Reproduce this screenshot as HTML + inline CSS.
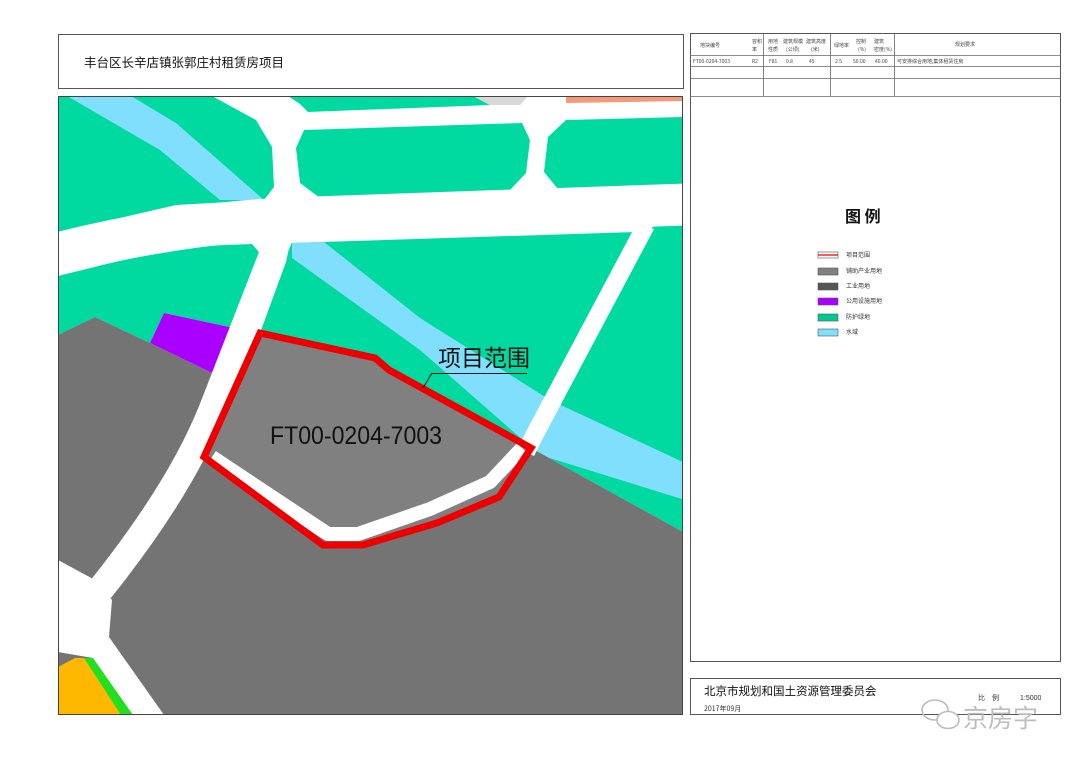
<!DOCTYPE html>
<html><head><meta charset="utf-8">
<style>
html,body{margin:0;padding:0;background:#fff;}
body{width:1080px;height:764px;position:relative;overflow:hidden;font-family:"Liberation Sans","Noto Sans CJK SC",sans-serif;}
.abs{position:absolute;}
</style></head><body>
<svg class="abs" style="left:0;top:0" width="1080" height="764" viewBox="0 0 1080 764">
<defs><clipPath id="mc"><rect x="58" y="96" width="625" height="619"/></clipPath></defs>
<!-- title box -->
<rect x="58.5" y="34.5" width="625" height="54" fill="#fff" stroke="#555" stroke-width="1"/>
<text x="84" y="67" font-size="12.5" font-family="Noto Sans CJK SC,sans-serif" fill="#111">丰台区长辛店镇张郭庄村租赁房项目</text>
<g clip-path="url(#mc)">
<rect x="58" y="96" width="625" height="619" fill="#fff"/>
<!-- green blocks -->
<polygon fill="#00d9a0" points="58,96 212,96 256,120 272,147 274,187 264,200 176,205 55,233"/>
<polygon fill="#00d9a0" points="288,96 473,96 490,105 308,112 300,104"/>
<polygon fill="#d8d8d8" points="473,96 528,96 520,105 490,105"/>
<polygon fill="#f59a78" points="566,96 685,96 685,101 566,103"/>
<polygon fill="#00d9a0" points="304,130 522,123 530,140 526,173 510,190 320,198 300,183 296,148"/>
<polygon fill="#00d9a0" points="566,120 685,117 685,185 558,189 544,172 548,137"/>
<polygon fill="#00d9a0" points="58,276 176,247 252,244 264,258 234,328 164,313 150,343 95,317 58,335"/>
<polygon fill="#00d9a0" points="290,243 636,232 531,448 389,370 375,358 260,333 286,262"/>
<polygon fill="#00d9a0" points="640,232 685,215 685,533 531,448"/>
<!-- water -->
<polygon fill="#80dffc" points="67,96 131,96 176,123 264,200 220,200 160,150"/>
<polygon fill="#80dffc" points="292,243 324,242 420,318 550,400 685,463 685,500 540,455 420,350 292,258"/>
<!-- gray -->
<polygon fill="#747474" points="58,335 95,317 150,343 212,373 260,333 375,358 389,370 531,448 685,533 685,715 58,715"/>
<polygon fill="#aa00ff" points="164,313 234,328 212,373 150,343"/>
<!-- orange -->
<polygon fill="#ffb800" points="58,667 75,658 87,658 121,715 58,715"/>
<polygon fill="#22e020" points="84,658 93,658 133,715 121,715"/>
<polygon fill="#22e020" points="58,604 62,606 62,625 58,627"/>
<!-- roads -->
<path d="M284,225 L212,410 Q180,490 100,590" stroke="#fff" stroke-width="27" fill="none"/>
<polygon fill="#fff" points="58,560 95,580 112,600 109,637 164,715 133,715 93,658 58,652"/>
<path d="M646,225 L536,432 L526,452" stroke="#fff" stroke-width="18" fill="none"/>
<path d="M40,258 Q176,222 300,218 L700,204" stroke="#fff" stroke-width="42" fill="none"/>
<!-- red area -->
<polygon fill="#808080" points="260,333 375,358 389,370 531,448 499,497 437,523 363,545 323,545 204,457"/>
<polyline points="212,457 328,534 358,534 430,509 490,482 522,448" stroke="#fff" stroke-width="14" fill="none" stroke-linejoin="round"/>
<polygon fill="none" stroke="#ee0000" stroke-width="7" stroke-linejoin="miter" points="260,333 375,358 389,370 531,448 499,497 437,523 363,545 323,545 204,457"/>
<text x="438" y="366" font-size="23" font-family="Noto Sans CJK SC,sans-serif" fill="#111">项目范围</text>
<line x1="432" y1="373.5" x2="527" y2="373.5" stroke="#111" stroke-width="1"/>
<line x1="432" y1="373" x2="423" y2="388" stroke="#111" stroke-width="1"/>
<text x="270" y="444" font-size="25" fill="#111" textLength="172" lengthAdjust="spacingAndGlyphs">FT00-0204-7003</text>
</g>
<rect x="58.5" y="96.5" width="624" height="618" fill="none" stroke="#444" stroke-width="1"/>
<!-- right panel -->
<rect x="690.5" y="33.5" width="370" height="628" fill="#fff" stroke="#555" stroke-width="1"/>
<g stroke="#666" stroke-width="0.8">
<line x1="690" y1="55.5" x2="1060" y2="55.5"/>
<line x1="690" y1="66.5" x2="1060" y2="66.5"/>
<line x1="690" y1="78.5" x2="1060" y2="78.5"/>
<line x1="690" y1="96.5" x2="1060" y2="96.5"/>
<line x1="763.5" y1="33" x2="763.5" y2="96"/>
<line x1="830.5" y1="33" x2="830.5" y2="96"/>
<line x1="894.5" y1="33" x2="894.5" y2="96"/>
</g>
<g font-size="5" fill="#444" font-family="Noto Sans CJK SC,sans-serif">
<text x="700" y="47">地块编号</text><text x="752" y="43">容积</text><text x="752" y="51">率</text>
<text x="768" y="43">用地</text><text x="768" y="51">性质</text><text x="783" y="43">建筑规模</text><text x="786" y="51">(公顷)</text>
<text x="806" y="43">建筑高度</text><text x="811" y="51">(米)</text>
<text x="834" y="47">绿地率</text><text x="856" y="43">控制</text><text x="858" y="51">(%)</text>
<text x="874" y="43">建筑</text><text x="874" y="51">密度(%)</text><text x="955" y="46">规划要求</text>
<text x="693" y="63">FT00-0204-7003</text><text x="752" y="63">R2</text><text x="769" y="63">F81</text><text x="786" y="63">0.8</text><text x="809" y="63">45</text>
<text x="835" y="63">2.5</text><text x="853" y="63">50.00</text><text x="875" y="63">40.00</text><text x="897" y="63">可安排综合用地,集体租赁住房</text>
</g>
<text x="845" y="222" font-size="16" font-weight="bold" font-family="Noto Sans CJK SC,sans-serif" fill="#111">图 例</text>
<g stroke="#555" stroke-width="0.6">
<rect x="818" y="252" width="20" height="6" fill="#fff"/>
<rect x="818" y="268" width="20" height="7" fill="#808080"/>
<rect x="818" y="283" width="20" height="7" fill="#555"/>
<rect x="818" y="298" width="20" height="7" fill="#aa00ff"/>
<rect x="818" y="314" width="20" height="7" fill="#00c890"/>
<rect x="818" y="329" width="20" height="7" fill="#80dffc"/>
</g>
<line x1="818" y1="255" x2="838" y2="255" stroke="#e00" stroke-width="1.2"/>
<g font-size="6" fill="#333" font-family="Noto Sans CJK SC,sans-serif">
<text x="846" y="257">项目范围</text><text x="846" y="273">铺助产业用地</text><text x="846" y="288">工业用地</text>
<text x="846" y="303">公用设施用地</text><text x="846" y="319">防护绿地</text><text x="846" y="334">水域</text>
</g>
<rect x="690.5" y="678.5" width="370" height="36" fill="#fff" stroke="#555" stroke-width="1"/>
<text x="704" y="695" font-size="11.5" font-family="Noto Sans CJK SC,sans-serif" fill="#111">北京市规划和国土资源管理委员会</text>
<text x="704" y="711" font-size="7" font-family="Noto Sans CJK SC,sans-serif" fill="#333">2017年09月</text>
<text x="978" y="700" font-size="7" font-family="Noto Sans CJK SC,sans-serif" fill="#333">比　例</text>
<text x="1020" y="700" font-size="7" fill="#333">1:5000</text>
<!-- watermark -->
<g fill="none" stroke="#bbb" stroke-width="1.6">
<ellipse cx="935" cy="710" rx="13" ry="10"/>
<ellipse cx="948" cy="720" rx="11" ry="8.5" fill="#fff"/>
</g>
<text x="963" y="727" font-size="25" font-family="Noto Sans CJK SC,sans-serif" fill="#bdbdbd">京房字</text>
</svg>
</body></html>
